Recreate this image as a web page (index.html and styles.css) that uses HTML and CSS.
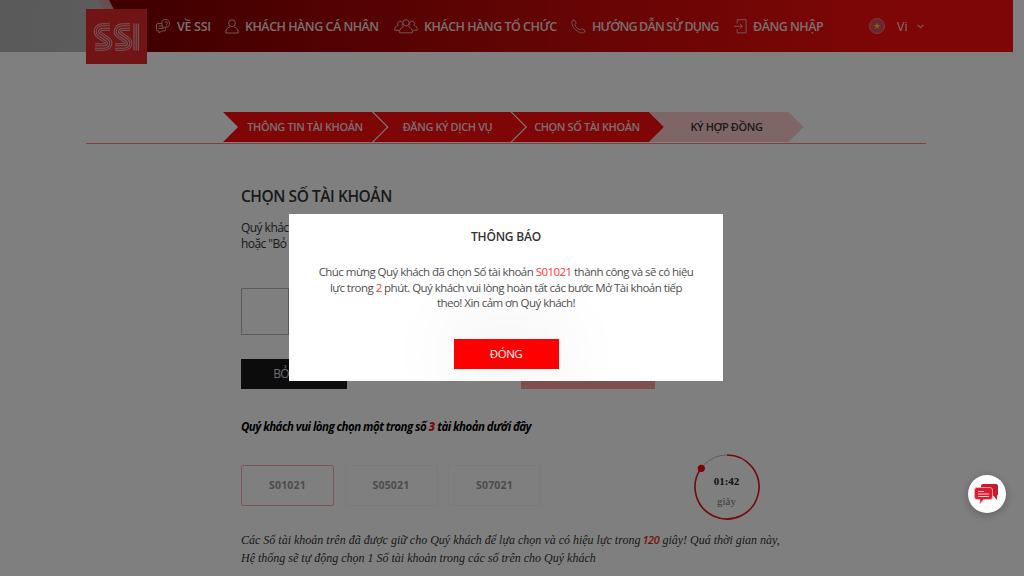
FILE: index.html
```html
<!DOCTYPE html>
<html lang="vi">
<head>
    <meta charset="UTF-8">
    <meta name="viewport" content="width=device-width, initial-scale=1.0">
    <title>SSI - Chọn số tài khoản</title>
    <link rel="stylesheet" href="styles.css">
</head>
<body>
    <header class="header">
        <svg class="header-slant" viewBox="0 0 66 52">
            <path d="M13 0h13l28 52H41z" fill="#d09c9f"/>
            <path d="M24 0h42v52H51z" fill="#820000"/>
        </svg>
        <div class="logo">
            <svg viewBox="0 0 61 55">
                <g id="s" fill="none">
                    <path d="M24 18h-7c-5.500 0-7.500 5-3.500 8l6.500 4.500c4.500 3 3 7.500-2.500 7.500H9" stroke="#e6b0b3" stroke-width="7.400"/>
                    <path d="M24 18h-7c-5.500 0-7.500 5-3.500 8l6.500 4.500c4.500 3 3 7.500-2.500 7.500H9" stroke="#e2282c" stroke-width="5.400"/>
                    <path d="M24 18h-7c-5.500 0-7.500 5-3.500 8l6.500 4.500c4.500 3 3 7.500-2.500 7.500H9" stroke="#e6b0b3" stroke-width="3.400"/>
                    <path d="M24 18h-7c-5.500 0-7.500 5-3.500 8l6.500 4.500c4.500 3 3 7.500-2.500 7.500H9" stroke="#e2282c" stroke-width="1.300"/>
                </g>
                <use href="#s" x="20"/>
                <path d="M48 14.500v27M50.200 14.500v27M52.400 14.500v27" stroke="#e6b0b3" stroke-width="1.200"/>
            </svg>
        </div>
        <nav class="nav">
            <a class="nav-item nav-about">
                <svg width="15" height="15" viewBox="0 0 15 15"><path d="M6 4.500H2A1.500 1.500 0 0 0 .5 6v4.500A1.500 1.500 0 0 0 2 12h1v2l2.500-2H8a1.500 1.500 0 0 0 1.500-1.500V9M2.500 7h4M2.500 9.500h4.500M7 7.500l-.5 2 2-1.200A4 4 0 1 0 7 7.500M9 3.700a1.200 1.200 0 1 1 1.500 1.200v.8M10.500 6.500v.7"/></svg>
                <span>VỀ SSI</span>
            </a>
            <a class="nav-item nav-personal">
                <svg width="14" height="15" viewBox="0 0 14 15"><circle cx="7" cy="4.200" r="3.400"/><path d="M.7 14c0-3.500 1.500-5.500 4.200-6M13.300 14c0-3.500-1.500-5.500-4.200-6M.7 14h12.600"/></svg>
                <span>KHÁCH HÀNG CÁ NHÂN</span>
            </a>
            <a class="nav-item nav-org">
                <svg width="24" height="15" viewBox="0 0 24 15"><circle cx="12" cy="3.800" r="3.100"/><path d="M5.500 13.800c0-3.200 1.600-5.500 4.300-6.500M18.500 13.800c0-3.200-1.600-5.500-4.300-6.500M5.500 13.800h13M8 6.300a2.500 2.500 0 1 0-4-.2C1.800 7 .7 8.500.6 11.300h4.900M16 6.300a2.500 2.500 0 1 1 4-.2c2.200.9 3.300 2.400 3.400 5.200h-4.900"/></svg>
                <span>KHÁCH HÀNG TỔ CHỨC</span>
            </a>
            <a class="nav-item nav-guide">
                <svg width="15" height="15" viewBox="0 0 15 15"><path d="M1.300 1.700 3 .8l2.300 3.400-1.500 1.300c.7 2.400 2.800 4.600 5.500 5.500l1.300-1.400 3.600 2-.8 1.700c-2 1.400-5.300.6-8.500-2.300C1.700 8.200-.1 4 1.300 1.700z"/></svg>
                <span>HƯỚNG DẪN SỬ DỤNG</span>
            </a>
            <a class="nav-item nav-login">
                <svg width="13" height="15" viewBox="0 0 13 15"><path d="M3.200 4.500V.7h8.900v13.200H3.200v-3.800M0 7.300h8.300M5.800 4.800l2.500 2.500-2.500 2.500"/></svg>
                <span>ĐĂNG NHẬP</span>
            </a>
            <a class="nav-item lang">
                <svg class="flag" width="16" height="16" viewBox="0 0 16 16"><circle cx="8" cy="8" r="7.500" fill="#dd4b52" stroke="#d98085"/><path d="M8 4.500l.9 2.400h2.500l-2 1.600.7 2.500L8 9.600 5.900 11l.7-2.500-2-1.600h2.500z" fill="#e8c840" stroke="none"/></svg>
                <span>Vi</span>
                <svg class="caret" width="7" height="5" viewBox="0 0 7 5"><path d="M.6.800 3.500 3.600 6.400.8"/></svg>
            </a>
        </nav>
    </header>

    <div class="steps">
        <div class="step step-first"><span>THÔNG TIN TÀI KHOẢN</span></div>
        <div class="step step-service"><span>ĐĂNG KÝ DỊCH VỤ</span></div>
        <div class="step step-account"><span>CHỌN SỐ TÀI KHOẢN</span></div>
        <div class="step step-next"><span>KÝ HỢP ĐỒNG</span></div>
    </div>

    <main class="content">
        <h1 class="title"><span>CHỌN SỐ TÀI KHOẢN</span></h1>
        <p class="intro">Quý khách<br>hoặc "Bỏ q</p>
        <div class="digit"></div>
        <div class="actions">
            <button class="btn-skip">BỎ QUA</button>
            <button class="btn-choose"></button>
        </div>
        <p class="hint"><span>Quý khách vui lòng chọn một trong số <b>3</b> tài khoản dưới đây</span></p>
        <div class="choices">
            <div class="choice selected">S01021</div>
            <div class="choice">S05021</div>
            <div class="choice">S07021</div>
            <div class="timer">
                <svg viewBox="0 0 68 68">
                    <circle cx="34" cy="34" r="32" fill="none" stroke="#b5bcbf" stroke-width="1"/>
                    <path d="M34 2a32 32 0 1 1-25.800 13.100" fill="none" stroke="#e5191c" stroke-width="1.600"/>
                    <circle cx="8.300" cy="15.300" r="3.600" fill="#f00808"/>
                </svg>
                <div class="timer-text"><strong>01:42</strong><span>giây</span></div>
            </div>
        </div>
        <p class="note"><span>Các Số tài khoản trên đã được giữ cho Quý khách để lựa chọn và có hiệu lực trong <b>120</b> giây! Quá thời gian này,</span><br><span>Hệ thống sẽ tự động chọn 1 Số tài khoản trong các số trên cho Quý khách</span></p>
    </main>

    <div class="overlay">
        <div class="modal">
            <h2>THÔNG BÁO</h2>
            <p><span>Chúc mừng Quý khách đã chọn Số tài khoản <em>S01021</em> thành công và sẽ có hiệu</span><br><span>lực trong <em>2</em> phút. Quý khách vui lòng hoàn tất các bước Mở Tài khoản tiếp</span><br><span>theo! Xin cảm ơn Quý khách!</span></p>
            <button class="btn-close">ĐÓNG</button>
        </div>
    </div>

    <div class="chat">
        <svg width="26" height="24" viewBox="0 0 26 24">
            <path d="M9 2h13a2 2 0 0 1 2 2v8a2 2 0 0 1-1 1.800V18l-3.500-4H9a2 2 0 0 1-2-2V4a2 2 0 0 1 2-2z" fill="#c51d2d"/>
            <path d="M3 5.500h13A2.500 2.500 0 0 1 18.500 8v7a2.500 2.500 0 0 1-2.500 2.500H9.500L6 22v-4.500H3A2.500 2.500 0 0 1 .5 15V8A2.500 2.500 0 0 1 3 5.500z" fill="#d81f30" stroke="#f3b5bb" stroke-width=".8"/>
            <path d="M4 9.500h6M4 12h11M4 14.500h11" stroke="#f6c4c8" stroke-width="1"/>
        </svg>
    </div>
</body>
</html>
```
FILE: styles.css
```css
* {
    box-sizing: border-box;
}
body {
    margin: 0;
    width: 1024px;
    height: 576px;
    overflow: hidden;
    background: #fff;
    color: #333;
    font-family: "Open Sans", "Noto Sans", sans-serif;
}
h1, h2, p {
    margin: 0;
}
span {
    white-space: nowrap;
}
button {
    border: 0;
    padding: 0;
    font-family: inherit;
}
.header {
    position: relative;
    display: flex;
    width: 1013px;
    height: 52px;
    padding-left: 86px;
    background: linear-gradient(100deg, #b4b4b4 0, #bababa 120px, transparent 121px), linear-gradient(90deg, #820000 140px, #a60404 340px, #d00a0a 600px, #fd0d0d 900px);
}
.header-slant {
    position: absolute;
    left: 85px;
    top: 0;
    width: 66px;
    height: 52px;
}
.logo {
    position: relative;
    width: 61px;
    height: 55px;
    margin-top: 9px;
    background: #e2282c;
    flex: none;
}
.logo svg {
    display: block;
    width: 61px;
    height: 55px;
}
.nav {
    display: grid;
    grid-template-columns: 69px 169px 177px 163px 135px 70px;
    align-items: center;
    margin-left: 9px;
    height: 52px;
}
.nav-item {
    display: flex;
    align-items: center;
    gap: 6px;
    color: #f3dede;
    font-size: 12.5px;
    font-weight: 600;
    letter-spacing: -0.5px;
}
.nav-item svg {
    flex: none;
    fill: none;
    stroke: #e9a9a9;
    stroke-width: 1;
}
.nav-about {
    letter-spacing: -0.3px;
}
.nav-guide {
    letter-spacing: -0.8px;
}
.lang {
    gap: 12px;
    font-weight: 400;
    letter-spacing: 0;
}
.lang .caret {
    margin-left: -3px;
    stroke-width: 1.3;
}
.steps {
    display: flex;
    width: 840px;
    height: 32px;
    margin: 60px 0 0 86px;
    padding: 0 0 1px 137px;
    border-bottom: 1px solid #ff8080;
}
.step {
    display: flex;
    align-items: center;
    justify-content: center;
    flex: none;
    width: 152px;
    height: 30px;
    margin-left: -13.5px;
    padding-bottom: 1px;
    background: #ff0c0c;
    color: #f3dede;
    font-size: 11px;
    font-weight: 600;
    letter-spacing: -0.4px;
    clip-path: polygon(0 0, calc(100% - 15px) 0, 100% 50%, calc(100% - 15px) 100%, 0 100%, 15px 50%);
}
.step-first {
    width: 164px;
    margin-left: 0;
}
.step-service {
    padding-right: 4px;
}
.step-account {
    padding-right: 2px;
}
.step-next {
    margin-left: -14.5px;
    width: 154px;
    background: #fdcdcf;
    color: #333;
}
.content {
    padding: 41px 0 0 241px;
}
.title {
    height: 35px;
    font-size: 15.5px;
    line-height: 23px;
    font-weight: 600;
    letter-spacing: -0.45px;
}
.intro {
    font-size: 12px;
    line-height: 16px;
    height: 68px;
    letter-spacing: -0.55px;
}
.digit {
    width: 48px;
    height: 47px;
    border: 1px solid #b5b5b5;
}
.actions {
    display: flex;
    gap: 174px;
    margin-top: 24px;
}
.btn-skip {
    width: 106px;
    height: 30px;
    padding-bottom: 2px;
    background: #181818;
    color: #ddd;
    font-size: 12px;
    letter-spacing: -0.7px;
}
.btn-choose {
    width: 134px;
    height: 30px;
    background: #ff9e9b;
}
.hint {
    margin-top: 30px;
    height: 46px;
    color: #000;
    font-size: 11.5px;
    line-height: 16px;
    font-weight: 700;
    font-style: italic;
    letter-spacing: -0.53px;
}
.hint b, .note b {
    color: #f01c1c;
}
.choices {
    display: flex;
    gap: 10.5px;
}
.choice {
    width: 93px;
    height: 41px;
    border: 1px solid #f6f6f6;
    border-radius: 2px;
    color: #999;
    font-size: 10.5px;
    line-height: 39px;
    font-weight: 700;
    letter-spacing: 0.2px;
    text-align: center;
}
.selected {
    border-color: #ffa8a8;
}
.timer {
    position: relative;
    width: 68px;
    height: 68px;
    margin: -12px 0 0 141px;
}
.timer-text {
    position: absolute;
    inset: 18px 0 0;
    display: flex;
    flex-direction: column;
    align-items: center;
    font-family: "Liberation Serif", serif;
    font-size: 11px;
    line-height: 20px;
    color: #777;
}
.timer-text strong {
    color: #222;
    line-height: 20px;
}
.note {
    margin-top: 10px;
    color: #333;
    font-family: "Liberation Serif", serif;
    font-size: 12px;
    line-height: 18px;
    font-style: italic;
}
.note b {
    margin-left: -1px;
    font-family: "Open Sans", sans-serif;
    font-size: 11px;
    font-weight: 600;
    line-height: 1;
    letter-spacing: -0.4px;
}
.overlay {
    position: fixed;
    inset: 0;
    padding: 214px 0 0 289px;
    background: rgba(0, 0, 0, .5);
}
.modal {
    display: flex;
    flex-direction: column;
    align-items: center;
    width: 434px;
    height: 167px;
    padding-top: 14px;
    background: #fff;
    overflow: hidden;
}
.modal h2 {
    font-size: 12px;
    line-height: 17px;
    font-weight: 600;
    letter-spacing: -0.2px;
}
.modal p {
    margin-top: 19px;
    font-size: 11.5px;
    line-height: 15.7px;
    text-align: center;
    color: #505050;
    letter-spacing: -0.54px;
}
.modal em {
    font-style: normal;
    color: #ff3434;
}
.btn-close {
    flex: none;
    width: 105px;
    height: 30px;
    margin-top: 28px;
    padding-bottom: 2px;
    background: #f00;
    color: #fff;
    font-size: 11.5px;
    letter-spacing: -0.5px;
    box-shadow: 0 0 80px rgba(0, 0, 0, .12);
}
.chat {
    position: fixed;
    left: 968px;
    top: 475px;
    display: flex;
    align-items: center;
    justify-content: center;
    width: 38px;
    height: 38px;
    border-radius: 50%;
    background: #fff;
    box-shadow: 0 2px 10px rgba(0, 0, 0, .25);
}
```
